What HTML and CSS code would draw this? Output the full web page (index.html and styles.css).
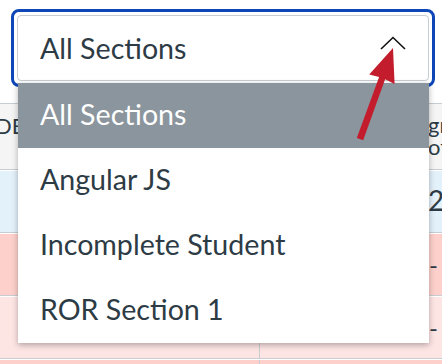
FILE: index.html
```html
<!DOCTYPE html>
<html lang="en">
<head>
    <meta charset="UTF-8">
    <meta name="viewport" content="width=device-width, initial-scale=1.0">
    <title>Section Filter</title>
    <link rel="stylesheet" href="styles.css">
</head>
<body>

<div class="page">
    <div class="focus-ring">
        <div class="select">
            <span class="select-value">All Sections</span>
            <svg class="chevron" width="26" height="14" viewBox="0 0 26 14">
                <polyline points="1,13 13,1.5 25,13" fill="none" stroke="#111" stroke-width="1.6"/>
            </svg>
        </div>
    </div>

    <div class="grades">
        <div class="row head">
            <div class="cell first">DEPARTMENT</div>
            <div class="cell second"><span>grade</span><span>of 100</span></div>
        </div>
        <div class="row blue">
            <div class="cell first"></div>
            <div class="cell second big">2</div>
        </div>
        <div class="row pink">
            <div class="cell first"></div>
            <div class="cell second dash">-</div>
        </div>
        <div class="row pale">
            <div class="cell first"></div>
            <div class="cell second dash">-</div>
        </div>
        <div class="row pink">
            <div class="cell first"></div>
            <div class="cell second"></div>
        </div>
    </div>

    <!-- open options list, sits over the table -->
    <ul class="menu">
        <li class="option active">All Sections</li>
        <li class="option">Angular JS</li>
        <li class="option">Incomplete Student</li>
        <li class="option">ROR Section 1</li>
    </ul>

    <!-- red callout arrow pointing at the chevron -->
    <svg class="pointer" width="56" height="106" viewBox="0 0 56 106">
        <polygon points="6.8,98 29.1,37 19.2,34.5 43,8 44.6,43.9 35.1,39.2 13.2,100.2" fill="#c31d2d"/>
    </svg>
</div>

</body>
</html>
```

FILE: styles.css
```css
body {
    margin: 0;
    background-color: #fff;
    font-family: 'Lato', 'Open Sans', sans-serif;
    color: #2d3b45;
    overflow: hidden;
}
.page {
    position: relative;
    width: 442px;
    height: 364px;
    overflow: hidden;
}

/* select with its focus outline */
.focus-ring {
    margin: 9px 0 0 11px;
    width: 424px;
    box-sizing: border-box;
    padding: 3px;
    border: 3px solid #0d47b7;
    border-radius: 8px;
}
.select {
    height: 66px;
    box-sizing: border-box;
    border: 1px solid #c7cdd1;
    border-radius: 4px;
    background-color: #fff;
    display: flex;
    align-items: center;
    justify-content: space-between;
    padding: 0 22px 0 22px;
}
.select-value {
    font-size: 28.6px;
}
.chevron {
    margin-top: -10px;
}

/* gradebook rows behind the menu */
.grades {
    margin-top: 16px;
    border-top: 1px solid #c7cdd1;
}
.row {
    display: grid;
    grid-template-columns: 260px 1fr;
    height: 63px;
    box-sizing: border-box;
    border-top: 1px solid #fff;
    border-bottom: 1px solid #c7cdd1;
}
.row.head {
    height: 66px;
    border-top: none;
    background-color: #f5f5f5;
}
.row.blue { background-color: #e3f1fb; }
.row.pink { background-color: #fdd0cb; }
.row.pale { background-color: #fde5e4; }
.cell {
    overflow: hidden;
    white-space: nowrap;
}
.cell.first {
    border-right: 1px solid #c7cdd1;
}
.row.head .cell.first {
    font-size: 22px;
    padding-top: 8px;
    text-indent: -5px;
    border-right: none;
}
.cell.second {
    padding-left: 168px;
    display: flex;
    flex-direction: column;
    justify-content: center;
}
.row.head .cell.second {
    font-size: 22px;
    line-height: 22px;
    justify-content: flex-start;
    padding-top: 10px;
}
.cell.big {
    font-size: 28px;
    padding-bottom: 4px;
}
.cell.dash {
    font-size: 24px;
    padding-left: 169px;
}

/* dropdown list */
.menu {
    position: absolute;
    top: 83px;
    left: 18px;
    width: 411px;
    margin: 0;
    padding: 0;
    list-style: none;
    background-color: #fff;
    box-shadow: 0 2px 6px rgba(0, 0, 0, 0.3);
}
.option {
    height: 65px;
    padding-left: 22px;
    padding-bottom: 3px;
    box-sizing: border-box;
    display: flex;
    align-items: center;
    font-size: 28.6px;
    color: #2d3b45;
}
.option.active {
    background-color: #8b959d;
    color: #fff;
}

.pointer {
    position: absolute;
    left: 350px;
    top: 40px;
}
```
